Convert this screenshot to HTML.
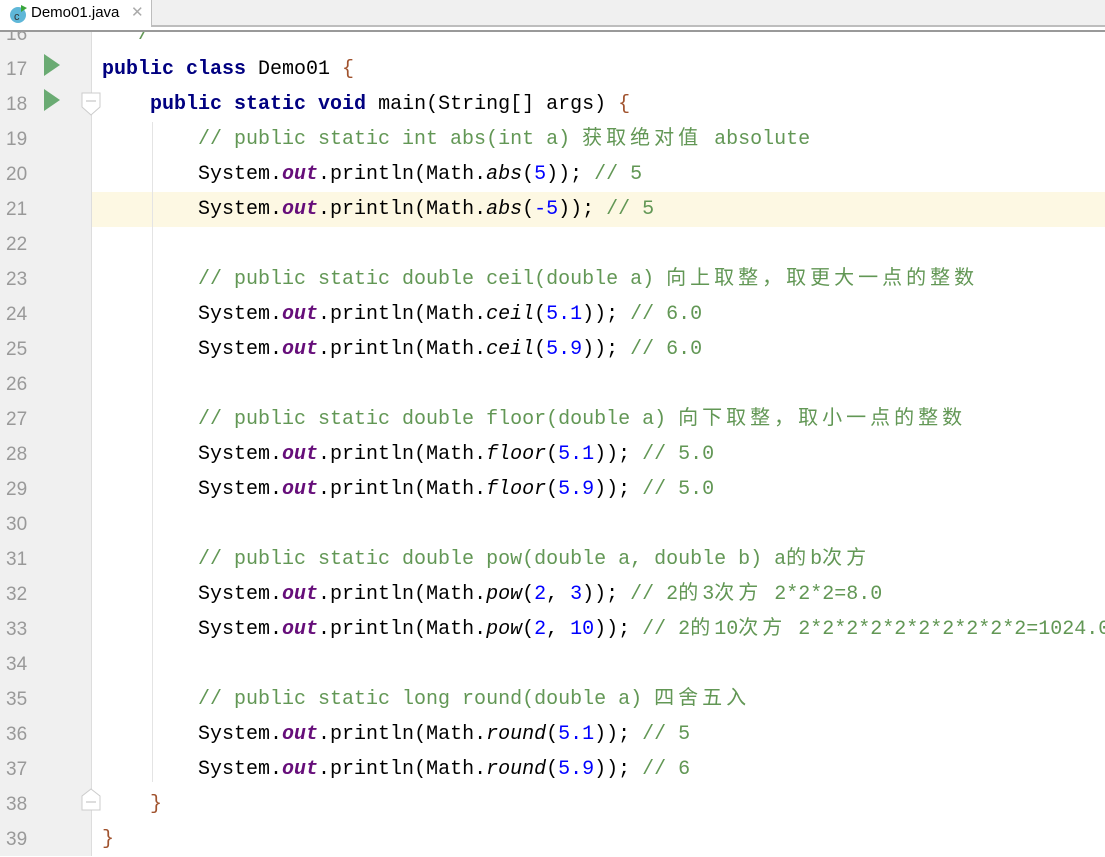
<!DOCTYPE html>
<html><head><meta charset="utf-8"><style>
body{margin:0;width:1105px;height:856px;overflow:hidden;background:#fff;position:relative;font-family:"Liberation Mono","Noto Sans CJK SC",monospace;}
#tabbar{position:absolute;left:0;top:0;width:1105px;height:25px;background:#f0f0f0;border-bottom:2px solid #bdbdbd;z-index:5}
#tab{position:absolute;left:0;top:0;width:151px;height:27px;background:#fff;border-right:1px solid #bdbdbd;font-family:"Liberation Sans",sans-serif;font-size:15px;z-index:6}
#gap{position:absolute;left:0;top:27px;width:1105px;height:3px;background:#fff;z-index:5}
#line2{position:absolute;left:0;top:30px;width:1105px;height:2px;background:#999;z-index:5}
#gutter{position:absolute;left:0;top:32px;width:91px;height:824px;background:#f0f0f0;border-right:1px solid #ddd;}
.ln{position:absolute;left:6px;width:30px;font-family:"Liberation Sans",sans-serif;font-size:19px;color:#999;line-height:35px;}
.row{position:absolute;left:102px;height:35px;line-height:35px;font-size:20px;white-space:pre;color:#000;}
.k{color:#000080;font-weight:bold}
.c{color:#629755}
.n{color:#0000ff}
.o{color:#660e7a;font-weight:bold;font-style:italic}
.i{font-style:italic}
.z{letter-spacing:4px;font-family:"Noto Sans CJK SC",sans-serif;font-size:20px;line-height:1;display:inline-block;vertical-align:0px}
.b{color:#a0522d}
</style></head><body>
<div id="tabbar"></div>
<div id="gap"></div>
<div id="tab"><svg style="position:absolute;left:9px;top:4px" width="20" height="20"><circle cx="9" cy="11" r="8" fill="#5fb7d8"/><text x="5" y="16" font-size="11" font-family="Liberation Sans" fill="#333">c</text><polygon points="12,1 18,4 12,8" fill="#3aa53a"/></svg><span style="position:absolute;left:31px;top:4px;color:#000">Demo01.java</span><span style="position:absolute;left:131px;top:3px;color:#aaa;font-size:15px">✕</span></div>
<div id="line2"></div>
<div id="gutter"></div>
<div style="position:absolute;left:92px;top:192px;width:1013px;height:35px;background:#fdf8e3"></div>
<div style="position:absolute;left:152px;top:122px;width:1px;height:660px;background:#e4e4e4"></div>
<svg style="position:absolute;left:0;top:0" width="110" height="856">
<polygon points="44,54 60,65 44,76" fill="#6aab73"/>
<polygon points="44,89 60,100 44,111" fill="#6aab73"/>
<path d="M82,93 H100 V107 L91,115 L82,107 Z" fill="#fff" stroke="#ccc"/>
<line x1="86" y1="101" x2="96" y2="101" stroke="#bbb"/>
<path d="M82,810 H100 V796 L91,789 L82,796 Z" fill="#fff" stroke="#ccc"/>
<line x1="86" y1="802" x2="96" y2="802" stroke="#bbb"/>
</svg>
<div id="lines"></div>
<script>
var L=[
['16','  <span class="c">*/</span>'],
['17','<span class="k">public class</span> Demo01 <span class="b">{</span>'],
['18','    <span class="k">public static void</span> main(String[] args) <span class="b">{</span>'],
['19','        <span class="c">// public static int abs(int a) <span class="z">获取绝对值</span> absolute</span>'],
['20','        System.<span class="o">out</span>.println(Math.<span class="i">abs</span>(<span class="n">5</span>)); <span class="c">// 5</span>'],
['21','        System.<span class="o">out</span>.println(Math.<span class="i">abs</span>(<span class="n">-5</span>)); <span class="c">// 5</span>'],
['22',''],
['23','        <span class="c">// public static double ceil(double a) <span class="z">向上取整，取更大一点的整数</span></span>'],
['24','        System.<span class="o">out</span>.println(Math.<span class="i">ceil</span>(<span class="n">5.1</span>)); <span class="c">// 6.0</span>'],
['25','        System.<span class="o">out</span>.println(Math.<span class="i">ceil</span>(<span class="n">5.9</span>)); <span class="c">// 6.0</span>'],
['26',''],
['27','        <span class="c">// public static double floor(double a) <span class="z">向下取整，取小一点的整数</span></span>'],
['28','        System.<span class="o">out</span>.println(Math.<span class="i">floor</span>(<span class="n">5.1</span>)); <span class="c">// 5.0</span>'],
['29','        System.<span class="o">out</span>.println(Math.<span class="i">floor</span>(<span class="n">5.9</span>)); <span class="c">// 5.0</span>'],
['30',''],
['31','        <span class="c">// public static double pow(double a, double b) a<span class="z">的</span>b<span class="z">次方</span></span>'],
['32','        System.<span class="o">out</span>.println(Math.<span class="i">pow</span>(<span class="n">2</span>, <span class="n">3</span>)); <span class="c">// 2<span class="z">的</span>3<span class="z">次方</span> 2*2*2=8.0</span>'],
['33','        System.<span class="o">out</span>.println(Math.<span class="i">pow</span>(<span class="n">2</span>, <span class="n">10</span>)); <span class="c">// 2<span class="z">的</span>10<span class="z">次方</span> 2*2*2*2*2*2*2*2*2*2=1024.0</span>'],
['34',''],
['35','        <span class="c">// public static long round(double a) <span class="z">四舍五入</span></span>'],
['36','        System.<span class="o">out</span>.println(Math.<span class="i">round</span>(<span class="n">5.1</span>)); <span class="c">// 5</span>'],
['37','        System.<span class="o">out</span>.println(Math.<span class="i">round</span>(<span class="n">5.9</span>)); <span class="c">// 6</span>'],
['38','    <span class="b">}</span>'],
['39','<span class="b">}</span>']];
var h='';
for(var j=0;j<L.length;j++){var t=17+35*j;
h+='<div class="ln" style="top:'+t+'px">'+L[j][0]+'</div><div class="row" style="top:'+t+'px">'+L[j][1]+'</div>';}
document.getElementById('lines').innerHTML=h;
</script>
</body></html>
